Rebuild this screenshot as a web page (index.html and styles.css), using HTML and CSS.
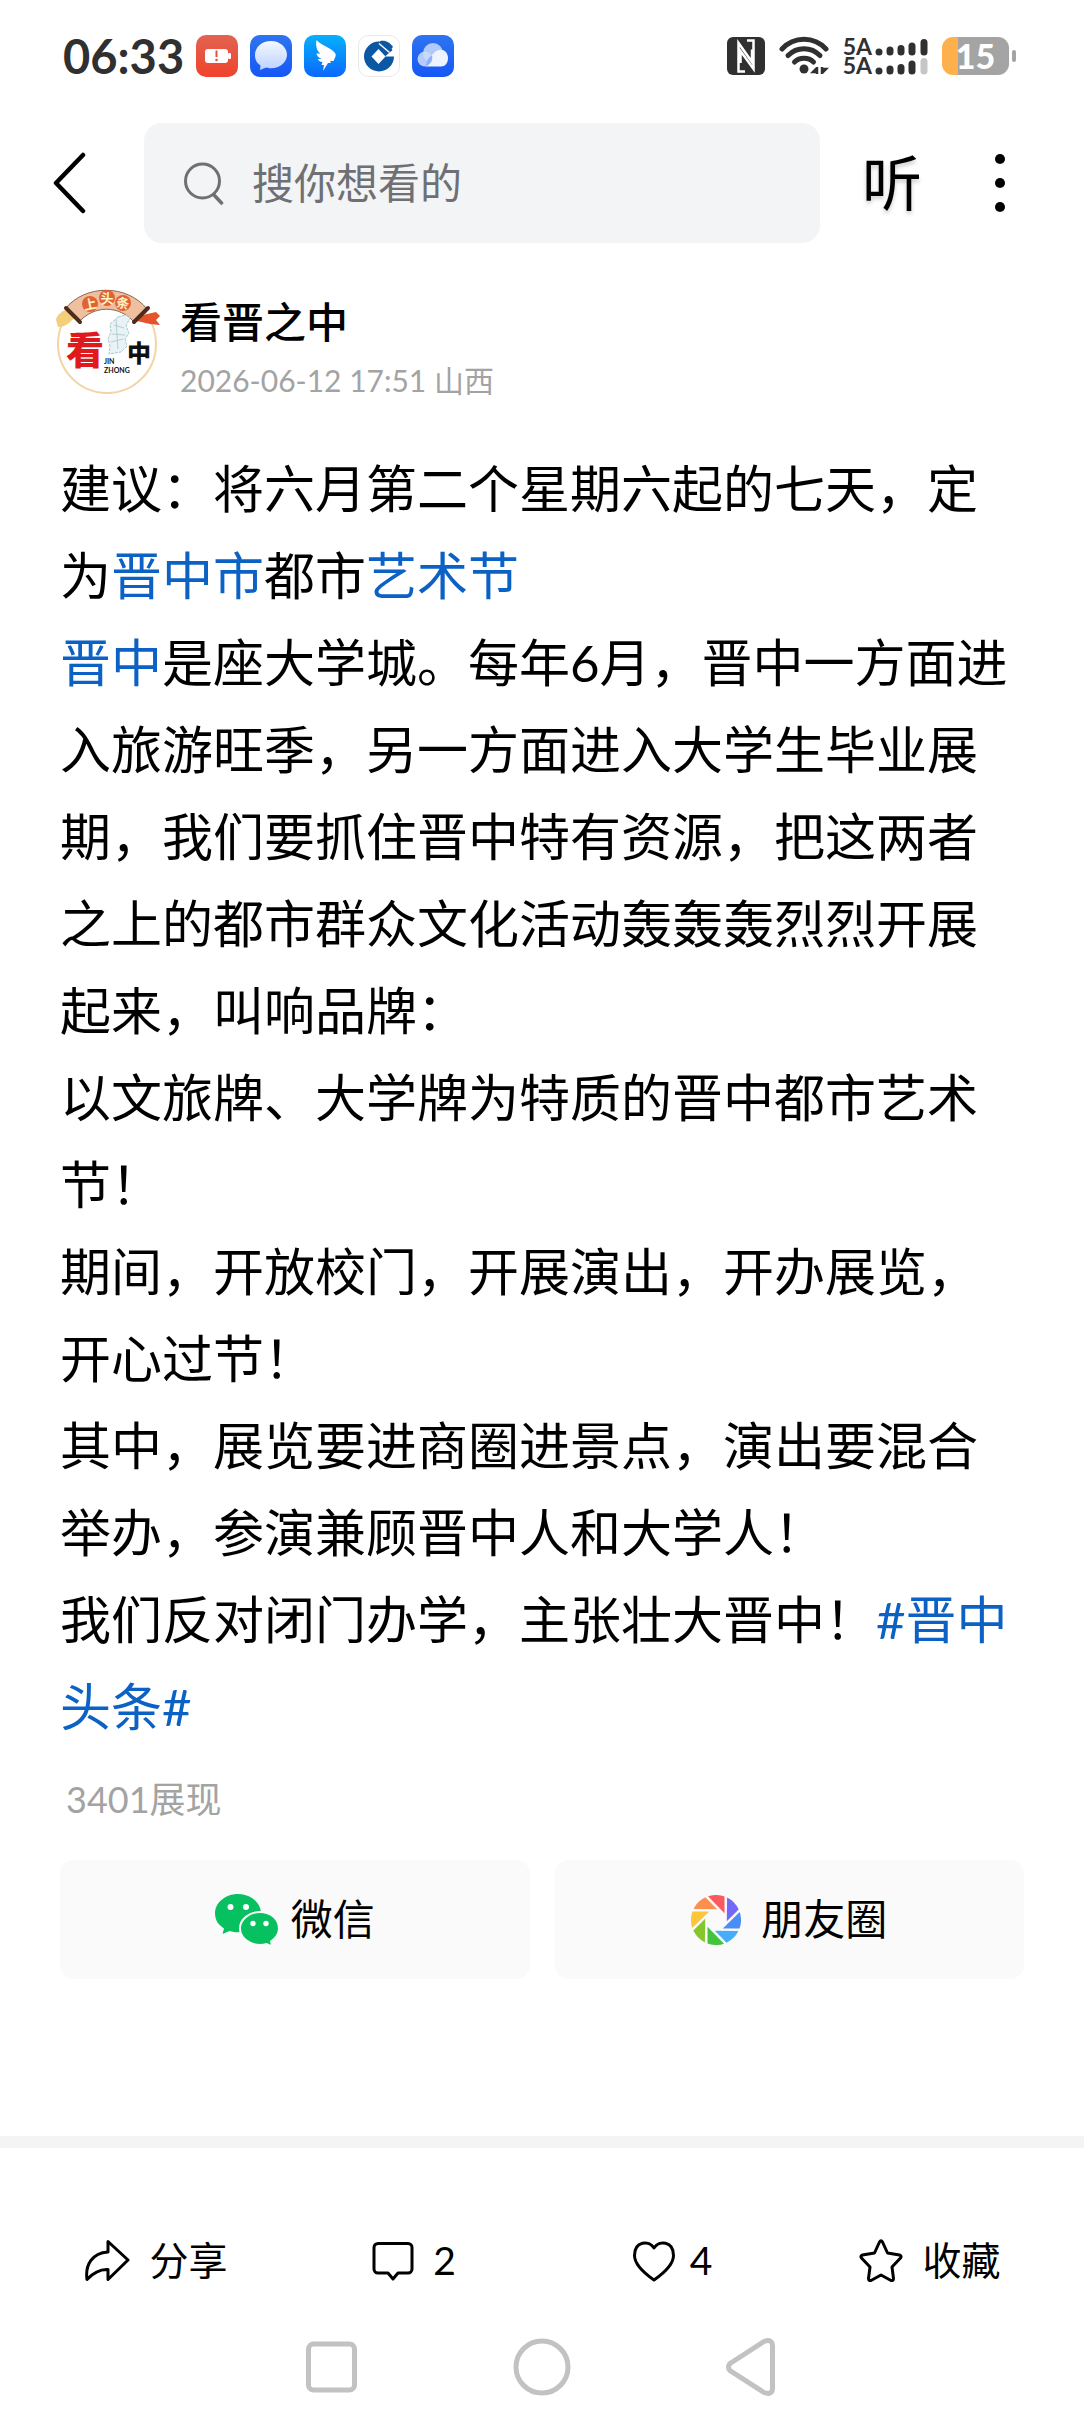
FILE: index.html
```html
<!DOCTYPE html>
<html lang="zh-CN">
<head>
<meta charset="utf-8">
<meta name="viewport" content="width=device-width, initial-scale=1">
<title>看晋之中</title>
<link rel="stylesheet" href="styles.css">
</head>
<body>
<div class="status">
  <span class="clock">06:33</span>
  <div class="apps">
    <svg class="app" viewBox="0 0 42 42"><defs><linearGradient id="red" x2="0" y2="1"><stop stop-color="#e26350"/><stop offset="1" stop-color="#f0432c"/></linearGradient></defs><rect width="42" height="42" rx="10" fill="url(#red)"/><rect x="9" y="14" width="23" height="14" rx="3" fill="#fff"/><rect x="32" y="18" width="3" height="6" rx="1" fill="#fff"/><path d="M20.5 15.500V22" stroke="#e5503c" stroke-width="2"/><circle cx="20.500" cy="25" r="1.300" fill="#e5503c"/></svg>
    <svg class="app" viewBox="0 0 42 42"><defs><linearGradient id="blue" x2="0" y2="1"><stop stop-color="#2f74f0"/><stop offset="1" stop-color="#1557f5"/></linearGradient><linearGradient id="pale" x2="0" y2="1"><stop stop-color="#f4f8ff"/><stop offset="1" stop-color="#bcd2ff"/></linearGradient></defs><rect width="42" height="42" rx="10" fill="url(#blue)"/><path d="M21 6C12 6 5 12 5 20c0 5 2 8 5.500 10.500L10 35l6-2.500c2 .600 3 .800 5 .800 9 0 16-6 16-13.500S30 6 21 6z" fill="url(#pale)"/></svg>
    <svg class="app" viewBox="0 0 42 42"><defs><linearGradient id="sky" x2="0" y2="1"><stop stop-color="#06b0fc"/><stop offset="1" stop-color="#0b68fb"/></linearGradient></defs><rect width="42" height="42" rx="10" fill="url(#sky)"/><path d="M12.500 5c4 5 15 8 18.500 13 1.500 2 .500 4-1.500 8h-3.500l1 2h-3L19 36l1-6h-2.500l1-3c-3-.300-4-1.200-4.500-3l4-.300c-4-1.200-5-3-5.500-5.500l4 .500C12.500 16 11.500 10 12.500 5z" fill="#fff"/></svg>
    <svg class="app" viewBox="0 0 42 42"><rect x=".5" y=".5" width="41" height="41" rx="10" fill="#fff" stroke="#e8e8ea"/><circle cx="21" cy="21.500" r="15" fill="#0b57a4"/><path d="M27 21.500l10-8.500v8.500z" fill="#fff"/><path d="M20.500 14l7 7.500-7 7.500-7-7.500z" fill="#fff"/><path d="M22 6c6-1 10 1.500 13 6l-4 4-8-7z" fill="#0b57a4"/><path d="M21 8.500l10.500 9" stroke="#fff" stroke-width="1.500"/></svg>
    <svg class="app" viewBox="0 0 42 42"><rect width="42" height="42" rx="10" fill="url(#blue)"/><circle cx="13" cy="24" r="7.500" fill="#b5ccfb"/><circle cx="21" cy="18" r="10" fill="#cadafc" opacity=".85"/><path d="M14 31.500c0-6 4-10 9-14.500 6-5 13-1 13 6 0 5-3 8.500-7 8.500z" fill="#edf3ff"/><path d="M14 31.500C14 26 16 23 20 20c1 5-1 9-6 11.500z" fill="#8fb1f8"/></svg>
  </div>
  <div class="system">
    <svg class="nfc" viewBox="0 0 38 38"><rect width="38" height="38" rx="6" fill="#303030"/><path d="M18 34.500h-6.500V6L25 25V12.500M20 3.500h6.500V32L13.500 14v12" fill="none" stroke="#fff" stroke-width="2.500"/></svg>
    <svg class="wifi" viewBox="0 0 50 40"><g fill="none" stroke="#303030" stroke-width="5" stroke-linecap="round"><path d="M3 13C15 0 35 0 47 13"/><path d="M9 19.500c9-9 23-9 32 0"/><path d="M15.500 26c5-5 14-5 19 0"/></g><circle cx="25" cy="33" r="4.500" fill="#303030"/><path d="M38 31v7M38 32l-4 4h4M43 38v-7M43 37l4-4h-4" stroke="#303030" stroke-width="2.500" fill="none"/></svg>
    <div class="signals">
      <div class="signal"><span>5A</span><svg class="bars" viewBox="0 0 54 18"><g stroke="#303030" stroke-width="7" stroke-linecap="round"><path d="M5 14V14.100M16 12v2M27 10.500V14M38 8v6M50 4.500V14"/></g></svg></div>
      <div class="signal"><span>5A</span><svg class="bars" viewBox="0 0 54 18"><g stroke="#303030" stroke-width="7" stroke-linecap="round"><path d="M5 14V14.100M16 12v2M27 10.500V14M38 7v7"/><path d="M50 4.500V14" stroke="#c6c6c6"/></g></svg></div>
    </div>
    <div class="battery"><span class="level">15</span><span class="nub"></span></div>
  </div>
</div>

<header class="topbar">
  <button class="icon-btn back" aria-label="返回"><svg width="34" height="64" viewBox="0 0 34 64"><path d="M30 4L3 32l27 28" fill="none" stroke="#000" stroke-width="4.500" stroke-linecap="round" stroke-linejoin="round"/></svg></button>
  <label class="search">
    <svg width="40" height="44" viewBox="0 0 40 44"><circle cx="18.500" cy="20" r="17" fill="none" stroke="#6e7073" stroke-width="3"/><path d="M30 34l7.500 8" stroke="#6e7073" stroke-width="3.500" stroke-linecap="round"/></svg>
    <input type="search" placeholder="搜你想看的" aria-label="搜索">
  </label>
  <button class="icon-btn listen">听</button>
  <button class="icon-btn more" aria-label="更多"><svg width="12" height="60" viewBox="0 0 12 60"><circle cx="6" cy="6" r="5"/><circle cx="6" cy="30" r="5"/><circle cx="6" cy="54" r="5"/></svg></button>
</header>

<main>
  <section class="author">
    <svg class="avatar" viewBox="0 0 106 106" role="img" aria-label="看晋之中">
      <circle cx="53" cy="55" r="49" fill="#fff" stroke="#f3d4a4" stroke-width="2"/>
      <path d="M2 31c0-5 7-10 15-12l4 9c-5 6-10 10-17 10z" fill="#f3cf7b"/>
      <path d="M85 27l17-4 4 4-4 4 4 5-10-1-13-3z" fill="#e4532b"/>
      <path d="M11 20C31-5 73-5 93 20L80 33C65 16 40 16 25 33z" fill="#efc0a0" stroke="#8a6552" stroke-width="1"/>
      <path d="M12 19l14 14M94 19L80 33" stroke="#4e2c1c" stroke-width="4" stroke-linecap="round"/>
      <g fill="#e36232"><circle cx="36" cy="15" r="8"/><circle cx="53" cy="9" r="8"/><circle cx="69" cy="14" r="8"/></g>
      <g class="seal"><text x="36" y="20" transform="rotate(-12 36 15)">上</text><text x="53" y="14">头</text><text x="69" y="19" transform="rotate(12 69 14)">条</text></g>
      <path d="M64 28l8-2 4 3-4 8 3 7-4 6 2 7-6 6-12 2 1-9-2-6 3-7-1-8z" fill="#e9f2f5" stroke="#a9c8d2" stroke-width="1" stroke-dasharray="3 1"/>
      <path d="M60 36l10 3M58 45l13 1M57 53l12-3M62 30l2 30" stroke="#b4ced6" stroke-width="1"/>
      <text class="look" x="31" y="75">看</text>
      <text class="pinyin" x="50" y="75">JIN</text><text class="pinyin" x="50" y="84">ZHONG</text>
      <text class="mid" x="85" y="73">中</text>
    </svg>
    <div class="meta">
      <h1 class="name">看晋之中</h1>
      <p class="date">2026-06-12 17:51 山西</p>
    </div>
  </section>

  <article class="post">
    <p>建议：将六月第二个星期六起的七天，定为<a href="#">晋中市</a>都市<a href="#">艺术节</a></p>
    <p><a href="#">晋中</a>是座大学城。每年6月，晋中一方面进入旅游旺季，另一方面进入大学生毕业展期，我们要抓住晋中特有资源，把这两者之上的都市群众文化活动轰轰轰烈烈开展起来，叫响品牌：</p>
    <p>以文旅牌、大学牌为特质的晋中都市艺术节！</p>
    <p>期间，开放校门，开展演出，开办展览，开心过节！</p>
    <p>其中，展览要进商圈进景点，演出要混合举办，参演兼顾晋中人和大学人！</p>
    <p>我们反对闭门办学，主张壮大晋中！<a href="#">#晋中头条#</a></p>
  </article>
  <p class="views">3401展现</p>

  <div class="share">
    <button class="share-btn wechat">
      <svg width="64" height="53" viewBox="0 0 64 53"><g fill="#07c160"><path d="M23 1C10.500 1 0 9.500 0 20.500c0 6.500 3.500 11.500 9 15L7.500 41l7-3c3 1 5.500 1.300 8.500 1.300 12.500 0 23-8 23-18.800S35.500 1 23 1z"/><path d="M45 19c-11 0-20 7.500-20 16.500S34 52 45 52c2.500 0 4.500-.300 6.500-1l6 2.500-1.500-5c5-3.500 8-8 8-13C64 26.500 56 19 45 19z" stroke="#fafafa" stroke-width="2"/></g><g fill="#fff"><circle cx="15.500" cy="14" r="3"/><circle cx="31" cy="14" r="3"/><circle cx="38" cy="30.500" r="2.700"/><circle cx="51" cy="30.500" r="2.700"/></g></svg>
      <span>微信</span>
    </button>
    <button class="share-btn moments">
      <svg width="50" height="50" viewBox="-25 -25 50 50"><defs><path id="blade" d="M-8 -23.700A25 25 0 0 1 8.500 -23.500V-6.800z"/></defs><use href="#blade" fill="#fa5a5f"/><use href="#blade" transform="rotate(45)" fill="#7468f8"/><use href="#blade" transform="rotate(90)" fill="#4b8df8"/><use href="#blade" transform="rotate(135)" fill="#45adfc"/><use href="#blade" transform="rotate(180)" fill="#43c43c"/><use href="#blade" transform="rotate(225)" fill="#85c62b"/><use href="#blade" transform="rotate(270)" fill="#fdc638"/><use href="#blade" transform="rotate(315)" fill="#fb8f4e"/></svg>
      <span>朋友圈</span>
    </button>
  </div>
</main>

<footer class="actions">
  <button class="action"><svg width="46" height="44" viewBox="0 0 46 44"><path d="M24 3.500L44 22 24 41.500V31.500C15 31 9 35 3 41.500 1 27 8 15 24 14z"/></svg>分享</button>
  <button class="action"><svg width="42" height="44" viewBox="0 0 42 44"><path d="M6 5.500h30a4 4 0 0 1 4 4V31a4 4 0 0 1-4 4H26l-5 6-5-6H6a4 4 0 0 1-4-4V9.500a4 4 0 0 1 4-4z"/></svg>2</button>
  <button class="action like"><svg width="44" height="44" viewBox="0 0 44 44"><path d="M22 10C17 2 2.500 3 2.500 17.500 2.500 27 12 35 22 42c10-7 19.500-15 19.500-24.500C41.500 3 27 2 22 10z"/></svg>4</button>
  <button class="action"><svg width="44" height="44" viewBox="0 0 44 44"><path d="M20.500 4q1.500-2.500 3 0l5 11 12 2q2.500 1 1 3l-8.500 9 1.500 11.500q0 2.500-2.500 2L22 37l-10 5.500q-2.500.500-2.500-2L11 29l-8.500-9q-1.500-2 1-3l12-2z"/></svg>收藏</button>
</footer>

<nav class="keys">
  <button class="icon-btn" aria-label="最近任务"><svg width="60" height="60" viewBox="0 0 60 60"><rect x="6.500" y="7" width="46" height="46" rx="5"/></svg></button>
  <button class="icon-btn" aria-label="主屏幕"><svg width="60" height="60" viewBox="0 0 60 60"><circle cx="30" cy="30" r="26"/></svg></button>
  <button class="icon-btn" aria-label="后退"><svg width="60" height="60" viewBox="0 0 60 60"><path d="M8 26.500L42 4.500q8-3 8.500 4v43q-.500 7-8.500 4L8 33.500q-3-3.500 0-7z"/></svg></button>
</nav>
</body>
</html>
```
FILE: styles.css
```css
* { box-sizing: border-box; margin: 0; padding: 0; }

body {
  background: #fff;
  color: #000;
  font-family: Lato, "Noto Sans CJK SC", sans-serif;
}

button {
  border: 0;
  background: none;
  color: inherit;
  font: inherit;
}

svg { display: block; flex: none; }
a { color: #0b62c4; text-decoration: none; }

.status {
  display: flex;
  align-items: center;
  height: 112px;
  padding: 0 68px 0 63px;
  color: #303030;
}
.clock { width: 133px; font-size: 47px; font-weight: 700; line-height: 60px; }
.apps { display: flex; gap: 12px; }
.app { width: 42px; height: 42px; }
.system { display: flex; align-items: center; margin-left: auto; }
.nfc { width: 38px; height: 38px; }
.wifi { width: 50px; height: 40px; margin: 0 14px; }
.signals { margin-right: 14px; }
.signal {
  display: flex;
  align-items: center;
  gap: 2px;
  font-size: 23px;
  font-weight: 700;
  line-height: 19px;
}
.bars { width: 54px; height: 18px; }
.battery { display: flex; align-items: center; gap: 3px; }
.level {
  width: 67px;
  height: 38px;
  border-radius: 11px;
  background: linear-gradient(90deg, #fdb04b 16px, #a4a4a4 16px);
  color: #fff;
  font-size: 34px;
  font-weight: 900;
  line-height: 38px;
  text-align: center;
}
.nub { width: 4px; height: 12px; border-radius: 2px; background: #a4a4a4; }

.topbar {
  display: flex;
  align-items: center;
  padding: 11px 78px 0 53px;
}
.icon-btn { display: flex; align-items: center; justify-content: center; }
.search {
  display: flex;
  flex: 1;
  align-items: center;
  gap: 28px;
  min-width: 0;
  height: 120px;
  margin: 0 42px 0 57px;
  padding: 0 40px;
  border-radius: 18px;
  background: #f3f4f6;
}
.search input {
  flex: 1;
  min-width: 0;
  border: 0;
  outline: 0;
  background: none;
  font: inherit;
  font-size: 42px;
}
.search input::placeholder { color: #6e7073; opacity: 1; }
.listen {
  font-size: 60px;
  line-height: 60px;
  text-shadow: 0 3px 4px #0003;
}
.more { margin-left: 72px; }

.author {
  display: flex;
  align-items: flex-start;
  gap: 20px;
  padding: 46px 54px 0;
}
.avatar { width: 106px; height: 106px; }
.avatar text { text-anchor: middle; }
.seal { fill: #fff3c8; font-size: 13px; font-weight: 700; }
.look { fill: #e0191d; font-size: 38px; font-weight: 900; }
.mid { fill: #111; font-size: 24px; font-weight: 900; }
.avatar .pinyin { fill: #111; font-size: 7px; font-weight: 700; text-anchor: start; }
.meta { padding-top: 4px; line-height: 58px; }
.name { font-size: 42px; font-weight: 500; }
.date { color: #a3a3a3; font-size: 30px; }

.post {
  padding: 36px 60px 0;
  font-size: 51px;
  line-height: 87px;
}
.views {
  padding: 25px 66px 0;
  color: #a3a3a3;
  font-size: 36px;
  line-height: 48px;
}

.share {
  display: flex;
  gap: 25px;
  padding: 37px 60px 157px;
  border-bottom: 12px solid #f4f4f4;
}
.share-btn {
  display: flex;
  flex: 1;
  align-items: center;
  justify-content: center;
  height: 119px;
  border-radius: 14px;
  background: #fafafa;
  font-size: 42px;
  line-height: 52px;
}
.share-btn span { padding-bottom: 2px; }
.wechat { gap: 12px; }
.moments { gap: 20px; }

.actions {
  display: flex;
  padding: 86px 25px 36px 27px;
}
.action {
  display: flex;
  flex: 1;
  align-items: center;
  justify-content: center;
  gap: 19px;
  font-size: 39px;
  line-height: 52px;
}
.like { gap: 14px; }
.action svg {
  fill: none;
  stroke: #000;
  stroke-width: 3;
  stroke-linejoin: round;
}

.keys {
  display: flex;
  justify-content: center;
  gap: 150px;
  padding: 15px 0;
}
.keys svg { fill: none; stroke: #c2c2c2; stroke-width: 5; }
```
